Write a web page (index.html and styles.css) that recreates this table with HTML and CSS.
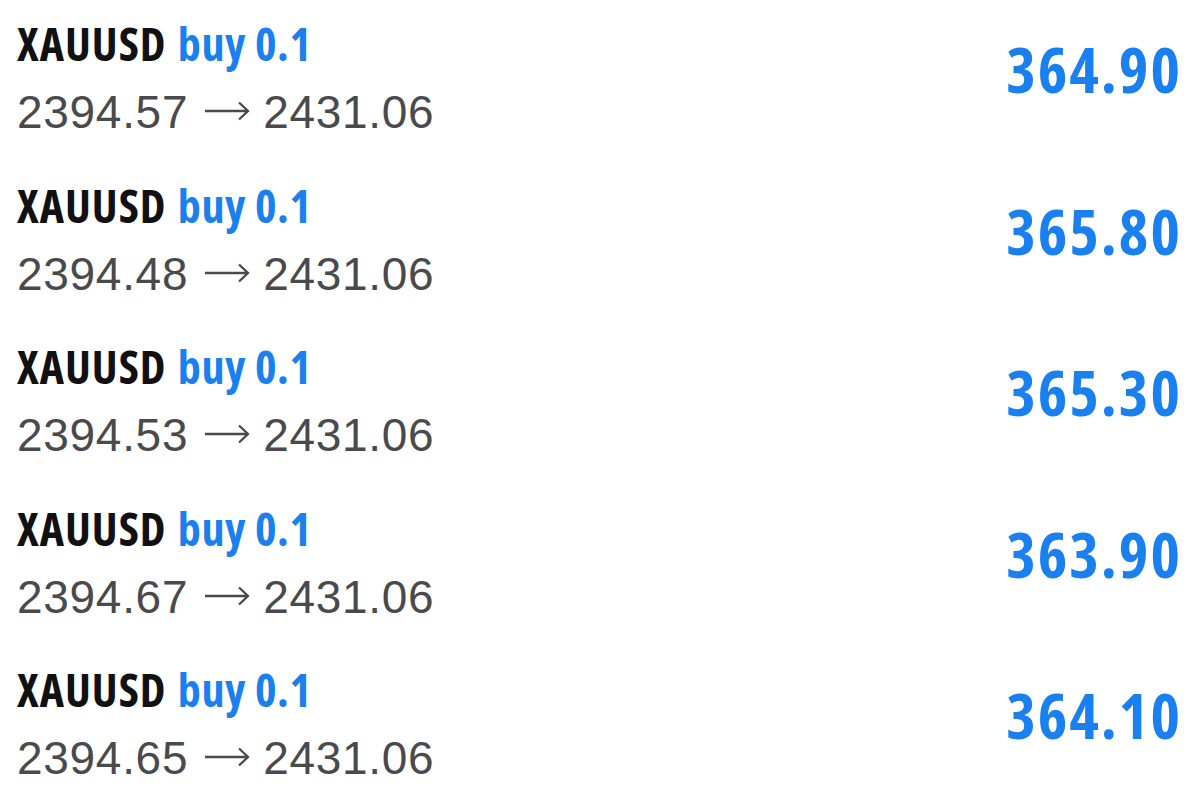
FILE: index.html
```html
<!DOCTYPE html>
<html lang="en">
<head>
  <meta charset="UTF-8">
  <title>Trades</title>
  <link rel="stylesheet" href="styles.css">
</head>
<body>

<main class="trade-list">
  <div class="trade">
    <div class="trade-info">
      <div class="trade-title">XAUUSD <span class="trade-side">buy 0.1</span></div>
      <div class="trade-prices">2394.57 <svg class="arrow" viewBox="0 0 46 20"><path d="M1 10H44M35 1.5L44 10L35 18.5"/></svg> 2431.06</div>
    </div>
    <div class="trade-profit">364.90</div>
  </div>
  <div class="trade">
    <div class="trade-info">
      <div class="trade-title">XAUUSD <span class="trade-side">buy 0.1</span></div>
      <div class="trade-prices">2394.48 <svg class="arrow" viewBox="0 0 46 20"><path d="M1 10H44M35 1.5L44 10L35 18.5"/></svg> 2431.06</div>
    </div>
    <div class="trade-profit">365.80</div>
  </div>
  <div class="trade">
    <div class="trade-info">
      <div class="trade-title">XAUUSD <span class="trade-side">buy 0.1</span></div>
      <div class="trade-prices">2394.53 <svg class="arrow" viewBox="0 0 46 20"><path d="M1 10H44M35 1.5L44 10L35 18.5"/></svg> 2431.06</div>
    </div>
    <div class="trade-profit">365.30</div>
  </div>
  <div class="trade">
    <div class="trade-info">
      <div class="trade-title">XAUUSD <span class="trade-side">buy 0.1</span></div>
      <div class="trade-prices">2394.67 <svg class="arrow" viewBox="0 0 46 20"><path d="M1 10H44M35 1.5L44 10L35 18.5"/></svg> 2431.06</div>
    </div>
    <div class="trade-profit">363.90</div>
  </div>
  <div class="trade">
    <div class="trade-info">
      <div class="trade-title">XAUUSD <span class="trade-side">buy 0.1</span></div>
      <div class="trade-prices">2394.65 <svg class="arrow" viewBox="0 0 46 20"><path d="M1 10H44M35 1.5L44 10L35 18.5"/></svg> 2431.06</div>
    </div>
    <div class="trade-profit">364.10</div>
  </div>
</main>

</body>
</html>
```
FILE: styles.css
```css
:root {
  --bg-color: #ffffff;
  --text-color: #111111;
  --muted-color: #4a4a4c;
  --blue: #1a80f0;
}
* { margin: 0; padding: 0; box-sizing: border-box; }
body {
  background: var(--bg-color);
  color: var(--text-color);
  font-family: 'Liberation Sans', Arial, sans-serif;
  width: 1200px;
  height: 810px;
  overflow: hidden;
}

.trade-list { display: flex; flex-direction: column; }
.trade {
  height: 161.5px;
  flex-shrink: 0;
  display: flex;
  align-items: flex-start;
  justify-content: space-between;
  padding: 15px 18px 0 17px;
}
.trade-title {
  font-family: 'Open Sans', sans-serif;
  font-stretch: 75%;
  font-weight: 700;
  font-size: 46px;
  line-height: 56px;
  letter-spacing: 1px;
  margin-bottom: 13px;
}
.trade-side { color: var(--blue); margin-left: 2px; letter-spacing: 0.6px; }
.trade-prices {
  font-size: 46px;
  line-height: 56px;
  letter-spacing: 0.7px;
  color: var(--muted-color);
  white-space: nowrap;
}
.arrow {
  width: 46px;
  height: 20px;
  vertical-align: 7px;
  margin-left: 2px;
  fill: none;
  stroke: var(--muted-color);
  stroke-width: 2.3;
}
.trade-profit {
  font-family: 'Open Sans', sans-serif;
  font-stretch: 75%;
  font-weight: 700;
  font-size: 63px;
  line-height: 70px;
  letter-spacing: 2px;
  margin-top: 19px;
  color: var(--blue);
}
```
